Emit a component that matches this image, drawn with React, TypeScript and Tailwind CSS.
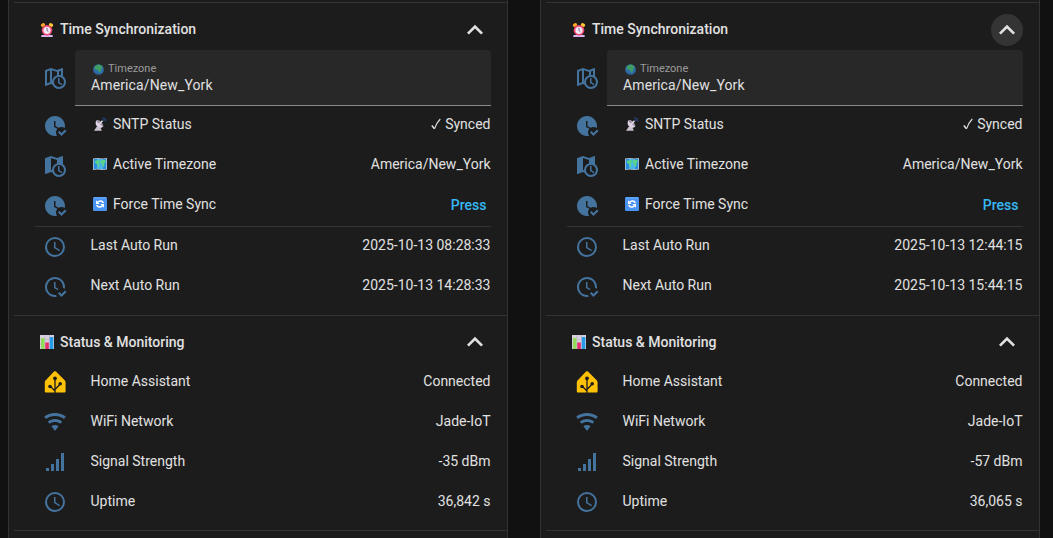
import React from "react";

const PATHS = {
  clock:
    "M12,20A8,8 0 0,0 20,12A8,8 0 0,0 12,4A8,8 0 0,0 4,12A8,8 0 0,0 12,20M12,2A10,10 0 0,1 22,12A10,10 0 0,1 12,22C6.47,22 2,17.5 2,12A10,10 0 0,1 12,2M12.5,7V12.25L17,14.92L16.25,16.15L11,13V7H12.5Z",
  clockCheckOutline:
    "M23.5 17L18.5 22L15 18.5L16.5 17L18.5 19L22 15.5L23.5 17M13.1 19.9C12.7 20 12.4 20 12 20C7.6 20 4 16.4 4 12S7.6 4 12 4 20 7.6 20 12C20 12.4 20 12.7 19.9 13.1C20.6 13.2 21.2 13.4 21.8 13.8C21.9 13.2 22 12.6 22 12C22 6.5 17.5 2 12 2S2 6.5 2 12C2 17.5 6.5 22 12 22C12.6 22 13.2 21.9 13.8 21.8C13.4 21.3 13.2 20.6 13.1 19.9M15.6 14.1L12.5 12.3V7H11V13L14.5 15.1C14.8 14.7 15.2 14.4 15.6 14.1Z",
  clockCheck:
    "M23.5 17L18.5 22L15 18.5L16.5 17L18.5 19L22 15.5L23.5 17M13 18.5C13 17 13.6 15.7 14.5 14.7L11 13V7H12.5V12.2L15.7 13.7C16.5 13.2 17.5 13 18.5 13C19.7 13 20.8 13.4 21.7 14C21.9 13.4 22 12.7 22 12C22 6.5 17.5 2 12 2C6.5 2 2 6.5 2 12C2 17.5 6.5 22 12 22C12.7 22 13.4 21.9 14 21.7C13.4 20.8 13 19.7 13 18.5Z",
  mapClock:
    "M15,12H16.5V16.25L19.36,17.94L18.61,19.16L15,17V12M23,16A7,7 0 0,1 16,23C13,23 10.4,21.08 9.42,18.4L8,17.9L2.66,19.97L2.5,20A0.5,0.5 0 0,1 2,19.5V4.38C2,4.15 2.15,3.97 2.36,3.9L8,2L14,4.1L19.34,2H19.5A0.5,0.5 0 0,1 20,2.5V10.25C21.81,11.5 23,13.62 23,16M9,16C9,12.83 11.11,10.15 14,9.29V6.11L8,4V15.89L9,16.24C9,16.16 9,16.08 9,16M16,11A5,5 0 0,0 11,16A5,5 0 0,0 16,21A5,5 0 0,0 21,16A5,5 0 0,0 16,11Z",
  mapClockOutline:
    "M15,12H16.5V16.25L19.36,17.94L18.61,19.16L15,17V12M23,16A7,7 0 0,1 16,23C13,23 10.4,21.08 9.42,18.4L8,17.9L2.66,19.97L2.5,20A0.5,0.5 0 0,1 2,19.5V4.38C2,4.15 2.15,3.97 2.36,3.9L8,2L14,4.1L19.34,2H19.5A0.5,0.5 0 0,1 20,2.5V10.25C21.81,11.5 23,13.62 23,16M9,16C9,12.83 11.11,10.15 14,9.29V6.11L9,4.35V16M4,5.46V17.31L7,16.15V4.45L4,5.46M16,5.46V9C16.7,9 17.37,9.1 18,9.29V4.7L16,5.46M16,11A5,5 0 0,0 11,16A5,5 0 0,0 16,21A5,5 0 0,0 21,16A5,5 0 0,0 16,11Z",
  wifi:
    "M12,21L15.6,16.2C14.6,15.45 13.35,15 12,15C10.65,15 9.4,15.45 8.4,16.2L12,21M12,3C7.95,3 4.21,4.34 1.2,6.6L3,9C5.5,7.12 8.62,6 12,6C15.38,6 18.5,7.12 21,9L22.8,6.6C19.79,4.34 16.05,3 12,3M12,9C9.3,9 6.81,9.89 4.8,11.4L6.6,13.8C8.1,12.67 9.97,12 12,12C14.03,12 15.9,12.67 17.4,13.8L19.2,11.4C17.19,9.89 14.7,9 12,9Z",
  signal: "M3,21H6V18H3M8,21H11V14H8M13,21H16V9H13M18,21H21V3H18V21Z",
};

type IconName = keyof typeof PATHS | "home";

function Icon({ name }: { name: IconName }) {
  if (name === "home") {
    return (
      <svg viewBox="0 0 24 24" className="size-6 shrink-0">
        <path
          fill="#ffc107"
          d="M12 1.2c.4 0 .7.1 1 .4l8.4 8.5c.8.8 1.2 1.5 1.2 2.6V21.2c0 .8-.6 1.4-1.4 1.4H3.2c-.8 0-1.4-.6-1.4-1.4V12.7c0-1.1.4-1.8 1.2-2.6L11 1.600c.3-.3.6-.4 1-.4Z"
        />
        <path fill="none" stroke="#1c1c1c" strokeWidth="1.3" d="M12 8v15M12 21l-5-5M12 19.5l5.2-5.5" />
        <circle cx="12" cy="8.3" r="1.9" fill="#1c1c1c" />
        <circle cx="7" cy="16.5" r="1.8" fill="#1c1c1c" />
        <circle cx="17.2" cy="13.7" r="1.8" fill="#1c1c1c" />
      </svg>
    );
  }
  return (
    <svg viewBox="0 0 24 24" className="size-6 shrink-0 text-[#44739e]" fill="currentColor">
      <path fillRule={name === "mapClockOutline" ? "evenodd" : "nonzero"} d={PATHS[name]} />
    </svg>
  );
}

function AlarmClock() {
  return (
    <svg viewBox="0 0 14 14" className="size-3.5 shrink-0">
      <path fill="#d9b8f0" d="M1.5 12h11l.3 1.9H1.2Z" />
      <ellipse cx="3" cy="2" rx="2.2" ry="1.7" fill="#f9a825" transform="rotate(-30 3 2)" />
      <ellipse cx="11" cy="2" rx="2.2" ry="1.7" fill="#ffc933" transform="rotate(30 11 2)" />
      <circle cx="7" cy="7.3" r="5.3" fill="#f0486f" />
      <circle cx="7" cy="7.3" r="3.6" fill="#f3e6f6" />
      <path d="M7 4.800v2.7l1.4 1.2" fill="none" stroke="#6c5c78" strokeWidth="0.9" />
    </svg>
  );
}

function BarChart() {
  return (
    <svg viewBox="0 0 14 14" className="size-3.5 shrink-0">
      <rect width="14" height="14" fill="#d9d0df" />
      <path d="M0 4.5h14M0 9h14M5 0v14M9.5 0v14" stroke="#b9acc4" strokeWidth="0.6" />
      <rect x="1" y="3" width="3.5" height="11" fill="#8fdd5b" />
      <rect x="5.3" y="7.5" width="3.5" height="6.5" fill="#e62d6d" />
      <rect x="9.8" y="2" width="3.5" height="12" fill="#259bea" />
    </svg>
  );
}

function Globe() {
  return (
    <svg viewBox="0 0 12 12" className="size-[11px] shrink-0">
      <circle cx="6" cy="6" r="5.8" fill="#2f6fa8" />
      <path fill="#3f9d62" d="M3 1.5 6.5.5l3 1.3.8 2-1.3 1.5-.5 2.7L6.8 9.5 5.5 6.5 2.5 5.8 1.5 4Z" />
      <path fill="#203f78" fillOpacity="0.6" d="M.4 7C1.5 9 4 10.5 7 10.5L9.5 10A5.8 5.8 0 0 1 .4 7Z" />
    </svg>
  );
}

function Antenna() {
  return (
    <svg viewBox="0 0 14 14" className="size-3.5 shrink-0">
      <path fill="#c9c0cf" d="M3.5 10 1 13.800h7.8L7.300 10Z" />
      <path fill="#ddd3e2" d="M3.200 3.500c-1.300 2.800-.3 6 2.500 7 1.800.6 3.400.2 4.600-1.100Z" />
      <path fill="#a598ad" d="m3.200 3.500 7.100 5.900c.3-1.600-.9-3.500-2.700-5-1.600-1.300-3.400-1.700-4.400-.9Z" />
      <path d="m6.500 6.900 3-3.200" stroke="#f0e9f4" strokeWidth="1.300" />
      <path d="M9.300 1c2-.2 3.600 1.300 3.500 3.400M9.700 2.800c.8 0 1.300.5 1.300 1.300" fill="none" stroke="#27468a" strokeWidth="1.100" />
    </svg>
  );
}

function WorldMap() {
  return (
    <svg viewBox="0 0 14 14" className="size-3.5 shrink-0">
      <path fill="#b7c6d6" d="M0 1.5 4.5 1l5 .5L14 1v11.5l-4.5.4-5-.5L0 13Z" />
      <path fill="#278de0" d="M.8 2.2 4.5 1.7v10L.8 12.2ZM9.5 2.2l3.7-.5v10l-3.7.5Z" />
      <path fill="#45b7ec" d="m4.5 1.7 5 .5v10l-5-.5Z" />
      <path fill="#5bd38b" d="m1.8 3.7 4.3-.8 1.2 1.5-1.6 2 .8 2-1.3 2.3-1-3.2-2-1.5ZM8 3.3l4.3-.5.4 2.2-1.5 1.5.5 2-1.5 1.8-1-2.8L7.7 6Z" />
    </svg>
  );
}

function SyncBadge() {
  return (
    <svg viewBox="0 0 14 14" className="size-3.5 shrink-0">
      <rect width="14" height="14" rx="1.2" fill="#4a93f2" />
      <path d="M1 1h12" stroke="#77b4fa" strokeWidth="0.9" />
      <path d="M10.3 6C9.6 3.7 6.3 3.2 4.7 5.2M3.7 8c.7 2.3 4 2.8 5.6.8" fill="none" stroke="#fff" strokeWidth="1.5" />
      <path fill="#fff" d="M3 3.2v3.7h3.7ZM11 10.8V7.1H7.3Z" />
    </svg>
  );
}

type HeaderProps = { icon: React.ReactNode; title: React.ReactNode; hovered?: boolean };

function Header({ icon, title, hovered = false }: HeaderProps) {
  return (
    <div className="flex h-8 items-center pr-4 pl-[31px]">
      {icon}
      <div className="ml-1.5 flex-1 font-medium">{title}</div>
      <button
        className={
          hovered
            ? "flex size-8 items-center justify-center rounded-full bg-[#343434]"
            : "flex size-8 items-center justify-center rounded-full"
        }
      >
        <svg viewBox="0 0 24 24" className="size-8" fill="#e1e1e1">
          <path d="M7.41,15.41L12,10.83L16.59,15.41L18,14L12,8L6,14L7.41,15.41Z" />
        </svg>
      </button>
    </div>
  );
}

type RowProps = {
  icon: IconName;
  emoji?: React.ReactNode;
  label: string;
  children: React.ReactNode;
  low?: boolean;
};

function Row({ icon, emoji, label, children, low = false }: RowProps) {
  return (
    <div className="flex h-10 items-center pr-[16.5px] pl-[34px]">
      <Icon name={icon} />
      <div className={low ? "flex flex-1 items-center pb-0.5 pl-[23.5px]" : "flex flex-1 items-center pb-1 pl-[23.5px]"}>
        {emoji && <span className="mr-1.5 ml-[2.5px]">{emoji}</span>}
        <span className="flex-1">{label}</span>
        {children}
      </div>
    </div>
  );
}

type Device = { last: string; next: string; signal: string; uptime: string; hovered?: boolean };

function DeviceCard({ last, next, signal, uptime, hovered }: Device) {
  return (
    <div className="h-full w-[500px] border-x border-[#333] bg-[#1c1c1c]">
      <div className="mt-0.5 ml-[5px] h-px bg-[#333]" />
      <div className="h-[11px]" />
      <Header icon={<AlarmClock />} title={<div className="pb-0.5">Time Synchronization</div>} hovered={hovered} />
      <div className="mt-1 flex h-14 items-center pr-4 pl-[34px]">
        <Icon name="mapClockOutline" />
        <div className="ml-2 h-14 flex-1 rounded-t border-b border-[#8a8a8a] bg-[#282828] pt-[11px] pl-4">
          <div className="flex h-4 items-center gap-1 pl-0.5 text-[11px] text-[#9b9b9b]">
            <Globe />
            <span>Timezone</span>
          </div>
          <div className="-mt-px leading-[18px] tracking-[0.12px]">America/New_York</div>
        </div>
      </div>
      <Row icon="clockCheck" emoji={<Antenna />} label="SNTP Status">
        <span className="flex items-center gap-1">
          <svg viewBox="0 0 10 12" className="h-3 w-2.5" fill="none" stroke="#e1e1e1">
            <path d="m.8 7.5 2.7 3.3" strokeWidth="1.5" />
            <path d="M3.5 10.8Q5 5.5 9.3 1" strokeWidth="1.1" />
          </svg>
          Synced
        </span>
      </Row>
      <Row icon="mapClock" emoji={<WorldMap />} label="Active Timezone">
        <span>America/New_York</span>
      </Row>
      <Row icon="clockCheck" emoji={<SyncBadge />} label="Force Time Sync">
        <button className="mr-1 pt-0.5 font-medium text-[#37b9f5]">Press</button>
      </Row>
      <div className="mr-4 ml-[26px] h-px bg-[#333]" />
      <Row icon="clock" label="Last Auto Run">
        <span>{last}</span>
      </Row>
      <Row icon="clockCheckOutline" label="Next Auto Run">
        <span>{next}</span>
      </Row>
      <div className="mt-2 ml-[5px] h-px bg-[#333]" />
      <div className="h-2.5" />
      <Header icon={<BarChart />} title="Status & Monitoring" />
      <div className="h-1" />
      <Row low icon="home" label="Home Assistant">
        <span>Connected</span>
      </Row>
      <Row low icon="wifi" label="WiFi Network">
        <span>Jade-IoT</span>
      </Row>
      <Row low icon="signal" label="Signal Strength">
        <span>{signal}</span>
      </Row>
      <Row low icon="clock" label="Uptime">
        <span>{uptime}</span>
      </Row>
      <div className="mt-2 ml-[5px] h-px bg-[#333]" />
    </div>
  );
}

const DEVICES: Device[] = [
  { last: "2025-10-13 08:28:33", next: "2025-10-13 14:28:33", signal: "-35 dBm", uptime: "36,842 s" },
  { last: "2025-10-13 12:44:15", next: "2025-10-13 15:44:15", signal: "-57 dBm", uptime: "36,065 s", hovered: true },
];

export default function App() {
  return (
    <div className="flex h-[538px] w-[1053px] gap-8 overflow-hidden bg-[#111] pl-2 font-['Roboto',sans-serif] text-[14px] leading-5 text-[#e1e1e1]">
      {DEVICES.map((d) => (
        <DeviceCard key={d.last} {...d} />
      ))}
    </div>
  );
}
